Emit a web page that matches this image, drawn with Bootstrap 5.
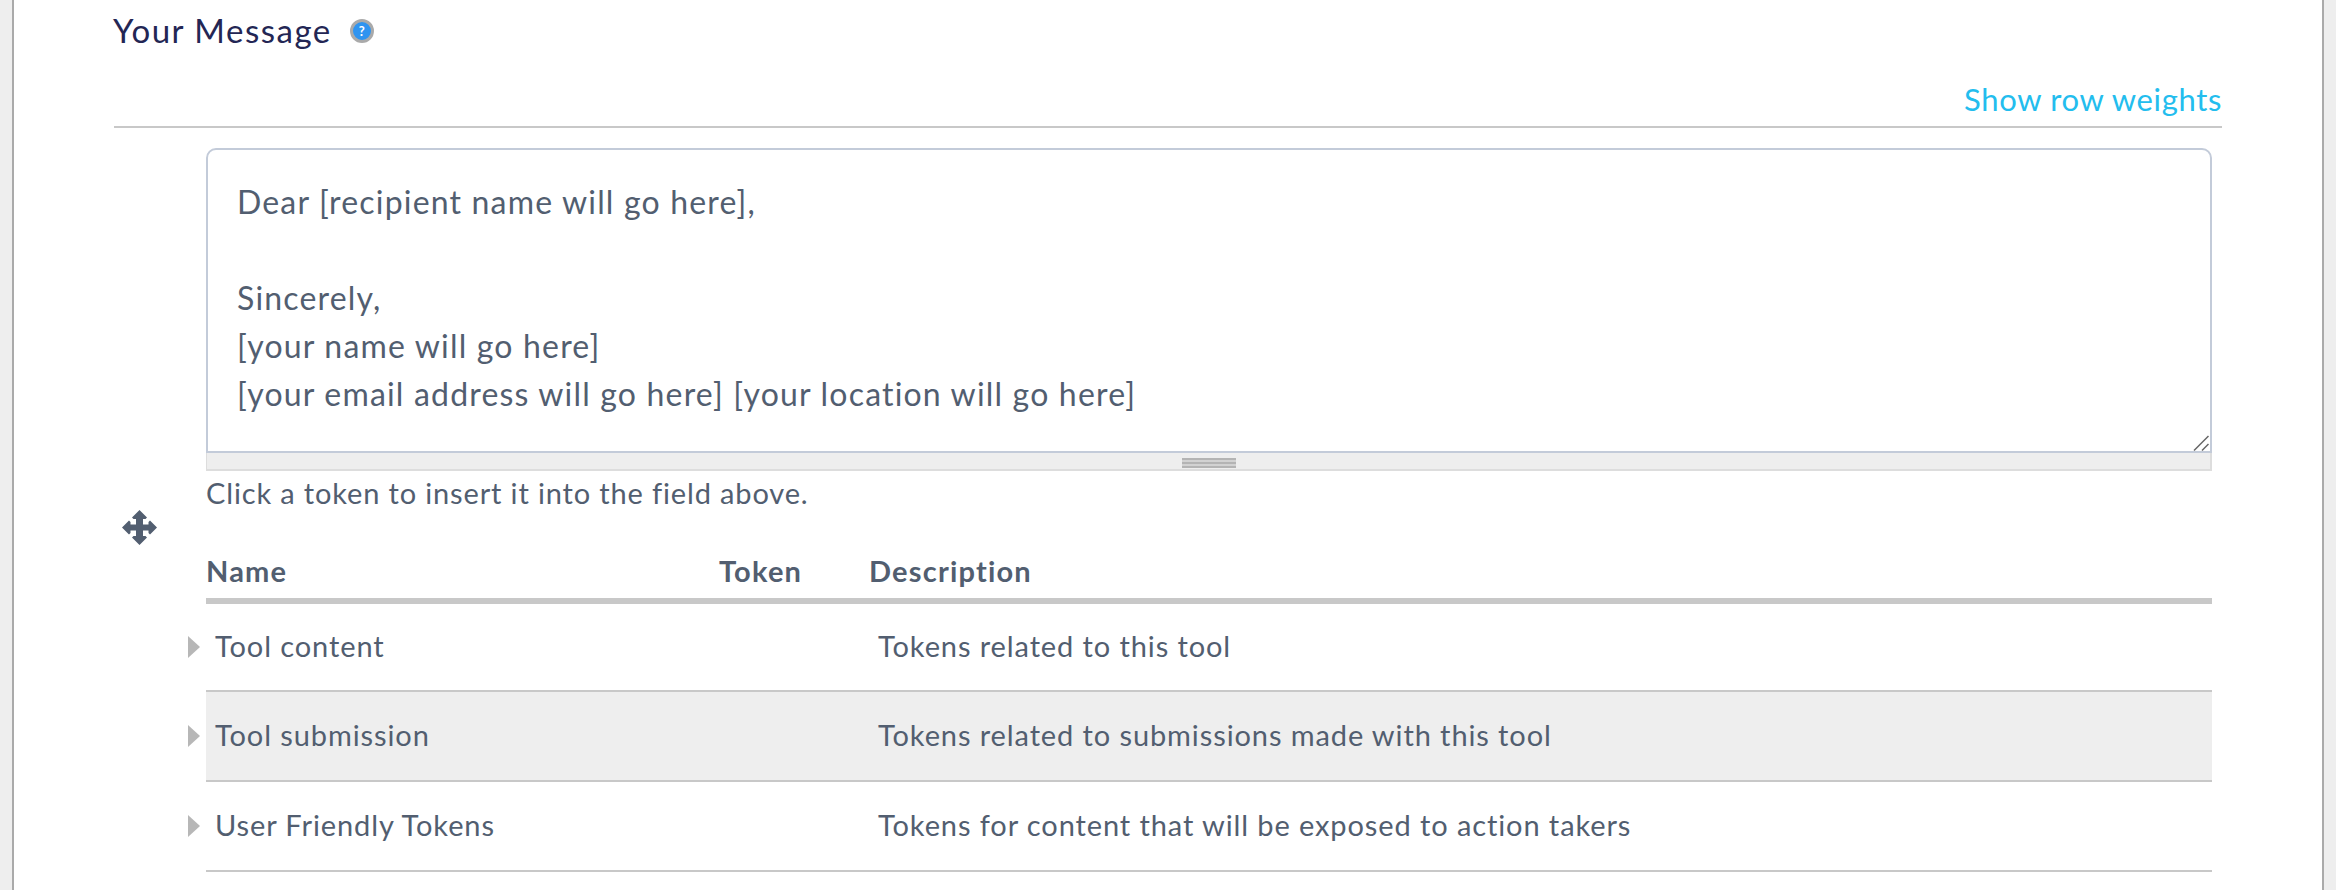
<!doctype html>
<html lang="en"><head><meta charset="utf-8"><title>Your Message</title>
<link rel="stylesheet" href="https://cdn.jsdelivr.net/npm/bootstrap@5.3.0/dist/css/bootstrap.min.css">
<style>
html,body{height:890px;overflow:hidden}
body{background:#eee;font-family:Lato,"Liberation Sans",sans-serif;color:#525e70;padding:0 12px}
.sheet{background:#fff;height:890px;border-left:2px solid #aaa;border-right:2px solid #aaa;padding:0 100px 0 99px;width:2312px}
.msg-title{font-size:33px;line-height:60px;letter-spacing:1.5px;color:#232654;margin:0;height:60px;padding-left:0;font-weight:400}
.help-dot{width:24px;height:24px;border-radius:50%;background:#2f94f0;border:3px solid #aaa;margin-left:8px;color:#fff;font-size:13px;letter-spacing:0;font-weight:700;line-height:18px;text-align:center;vertical-align:7px}
.weights-bar{height:68px;border-bottom:2px solid #c8c8c8;margin-left:1px;text-align:right;line-height:78px}
.weights-bar a{font-size:31px;letter-spacing:.65px;color:#23bdee;text-decoration:none}
.editor-row{padding-top:20px}
.drag-col{width:93px}
.drag-col svg{margin-left:9px;margin-top:362px;display:block}
.body-col{width:2006px}
.msg-input{width:100%;height:305px;display:block;border:2px solid #c3cbd9;border-radius:10px 10px 0 0;padding:28px 30px 28px 29px;font-size:32px;letter-spacing:1.18px;line-height:48px;color:#525e70;resize:none;box-shadow:none}
.resize-mark{position:absolute;right:3px;bottom:2px}
.grippie{height:18px;padding-top:5px;background:#eee;border:solid #ddd;border-width:0 2px 2px 1px}
.grippie-lines{width:54px;height:10px;margin:0 auto;background:repeating-linear-gradient(#b4b4b4 0 2px,#d2d2d2 2px 4px)}
.hint{font-size:29px;letter-spacing:.85px;line-height:44px;margin:0 0 34px}
.token-table{font-size:29px;letter-spacing:.9px;color:#525e70;margin:0;table-layout:fixed}
.token-table th{font-weight:700;letter-spacing:1.2px;padding:0 0 5px;border-bottom:6px solid #c8c8c8;line-height:44px;color:#525e70;background:none}
.token-table td{padding:0 0 2px 9px;height:90px;border-bottom:2px solid #c8c8c8;vertical-align:middle;color:#525e70;background:none;position:relative}
.token-table tr.alt td{background:#eee}
.caret-mark{position:absolute;left:-18px;top:50%;margin-top:-11px;border-left:12px solid #b7b7b7;border-top:11px solid transparent;border-bottom:11px solid transparent}
</style></head>
<body>
<div class="sheet">
<h2 class="msg-title">Your Message <span class="help-dot d-inline-block">?</span></h2>
<div class="weights-bar"><a href="#">Show row weights</a></div>
<div class="d-flex editor-row">
<div class="drag-col flex-shrink-0"><svg width="35" height="35" viewBox="0 0 35 35" fill="#525e70"><path d="M17.500 0l7.500 7.500-1.500 1.500H21v5.500h5.500V12l1.500-1.500 7 7-7 7-1.500-1.500v-2.500H21V26h2.500l1.500 1.500-7.500 7.500-7.500-7.500 1.500-1.500H14v-5.500H8.500V23L7 24.500l-7-7 7-7L8.500 12v2.500H14V9h-2.500L10 7.500z"/></svg></div>
<div class="body-col">
<div class="position-relative">
<textarea class="msg-input form-control">Dear [recipient name will go here],

Sincerely,
[your name will go here]
[your email address will go here] [your location will go here]</textarea>
<svg class="resize-mark" width="16" height="16" viewBox="0 0 16 16" stroke="#666" stroke-width="1.500" fill="none"><path d="M1 15.500L15.500 1M9 15.500l6.500-6.500"/></svg>
</div>
<div class="grippie"><div class="grippie-lines"></div></div>
<p class="hint">Click a token to insert it into the field above.</p>
<table class="table token-table">
<colgroup><col style="width:513px"><col style="width:150px"><col></colgroup>
<thead><tr><th>Name</th><th>Token</th><th>Description</th></tr></thead>
<tbody>
<tr><td><span class="caret-mark"></span>Tool content</td><td></td><td>Tokens related to this tool</td></tr>
<tr class="alt"><td><span class="caret-mark"></span>Tool submission</td><td></td><td>Tokens related to submissions made with this tool</td></tr>
<tr><td><span class="caret-mark"></span>User Friendly Tokens</td><td></td><td>Tokens for content that will be exposed to action takers</td></tr>
</tbody></table>
</div></div></div>
<script src="https://cdn.jsdelivr.net/npm/bootstrap@5.3.0/dist/js/bootstrap.bundle.min.js"></script>
</body></html>
